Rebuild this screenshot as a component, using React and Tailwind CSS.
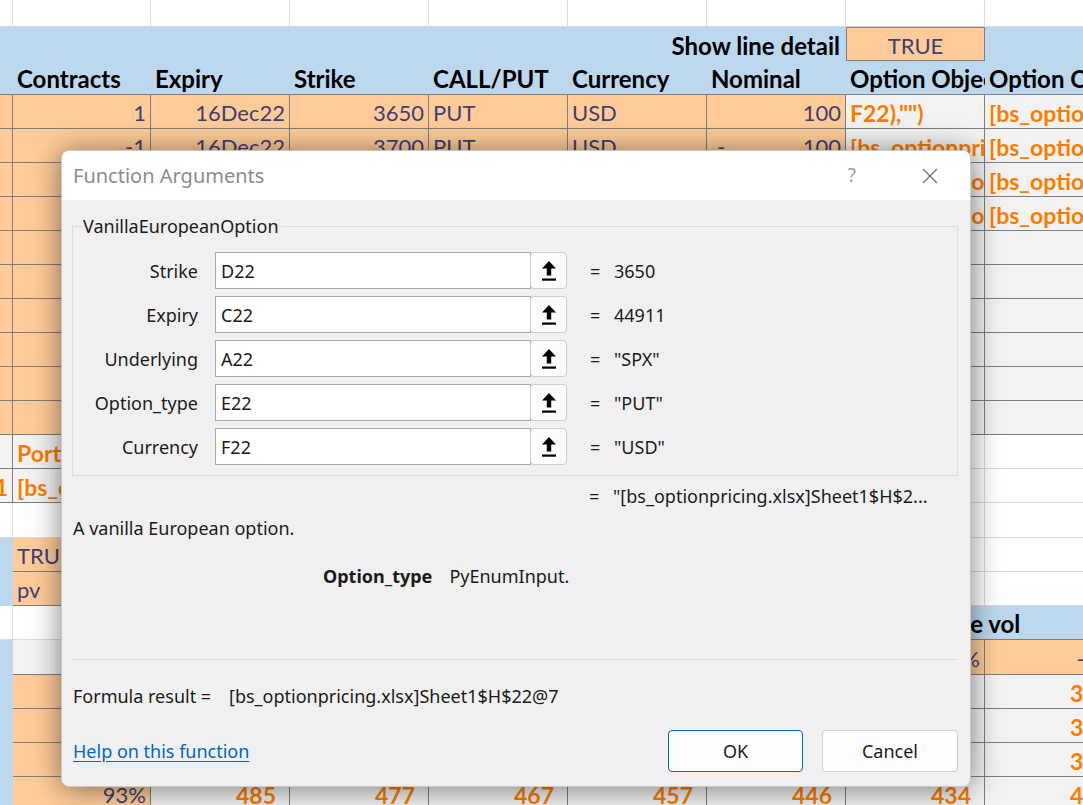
import React from 'react';

const COLS = ['w-[13px]', 'w-[138px]', 'w-[139px]', 'w-[139px]', 'w-[139px]', 'w-[139px]', 'w-[139px]', 'w-[139px]', 'w-[139px]'];

const KIND = {
  w: 'bg-white border-r border-b border-[#dadada]',
  b: 'bg-[#bdd7ee]',
  h: 'bg-[#bdd7ee] border-b border-[#7f7f7f] font-bold text-black text-[24px]',
  i: 'bg-[#ffcc99] border-r border-b border-[#7f7f7f] text-[#3f3f76]',
  c: 'bg-[#f2f2f2] border-r border-b border-[#7f7f7f] font-bold text-[#fa7d00] text-[23px]',
};

const ALIGN = {
  l: 'pl-[4px] overflow-hidden',
  r: 'justify-end pr-[4px] overflow-hidden',
  R: 'justify-end pr-[13px] overflow-hidden',
  c: 'justify-center overflow-hidden',
  j: 'justify-between pl-[10px] pr-[4px] overflow-hidden',
  o: 'justify-end pr-[6px]',
  v: 'relative z-[1] pl-[51px]',
};

const c = (k, v = '', a = 'l', x = '') => ({ k, v, a, x });
const fill = (k, n) => Array.from({ length: n }, () => c(k));

const rows = [
  { h: 'h-[27px]', cells: fill('w', 9) },
  {
    h: 'h-[34px]',
    cells: [...fill('b', 6), c('b', 'Show line detail', 'o', 'font-bold text-black text-[24px]'), c('i', 'TRUE', 'c', 'border-l border-t'), c('b')],
  },
  {
    h: 'h-[34px]',
    cells: [c('h'), c('h', 'Contracts'), c('h', 'Expiry'), c('h', 'Strike'), c('h', 'CALL/PUT'), c('h', 'Currency'), c('h', 'Nominal'), c('h', 'Option Object'), c('h', 'Option Cell')],
  },
  {
    h: 'h-[34px]',
    cells: [c('i'), c('i', '1', 'r'), c('i', '16Dec22', 'r'), c('i', '3650', 'r'), c('i', 'PUT'), c('i', 'USD'), c('i', '100', 'r'), c('c', 'F22),"")'), c('c', '[bs_optionpricing.xlsx]Sheet1$H$22@7')],
  },
  {
    h: 'h-[34px]',
    cells: [c('i'), c('i', '-1', 'r'), c('i', '16Dec22', 'r'), c('i', '3700', 'r'), c('i', 'PUT'), c('i', 'USD'), c('i', <><span>-</span><span>100</span></>, 'j'), c('c', '[bs_optionpricing.xlsx]Sheet1$H$23@7'), c('c', '[bs_optionpricing.xlsx]Sheet1$I$23@7')],
  },
  {
    h: 'h-[34px]',
    cells: [c('i'), c('i', '1', 'r'), c('i', '16Dec22', 'r'), c('i', '3750', 'r'), c('i', 'CALL'), c('i', 'USD'), c('i', '100', 'r'), c('c', '[bs_optionpo.xlsx]Sheet1$H$24@7'), c('c', '[bs_optionpricing.xlsx]Sheet1$I$24@7')],
  },
  {
    h: 'h-[34px]',
    cells: [c('i'), c('i', '-1', 'r'), c('i', '16Dec22', 'r'), c('i', '3800', 'r'), c('i', 'CALL'), c('i', 'USD'), c('i', <><span>-</span><span>100</span></>, 'j'), c('c', '[bs_optionpo.xlsx]Sheet1$H$25@7'), c('c', '[bs_optionpricing.xlsx]Sheet1$I$25@7')],
  },
  ...Array.from({ length: 6 }, () => ({ h: 'h-[34px]', cells: [...fill('i', 7), c('c'), c('c')] })),
  {
    h: 'h-[34px]',
    cells: [c('c'), c('c', 'Portfolio'), c('c'), ...fill('w', 6)],
  },
  {
    h: 'h-[34px]',
    cells: [c('c', 'c:1', 'r', 'pr-0'), c('c', '[bs_optionpricing.xlsx]Portfolio@1'), c('c'), ...fill('w', 6)],
  },
  { h: 'h-[35px]', cells: fill('w', 9) },
  { h: 'h-[34px]', cells: [c('b'), c('i', 'TRUE'), ...fill('w', 7)] },
  { h: 'h-[34px]', cells: [c('b'), c('i', 'pv'), ...fill('w', 7)] },
  {
    h: 'h-[34px]',
    cells: [c('w'), c('w'), c('h'), c('h'), c('h'), c('h'), c('h'), c('h', 'Relative vol', 'v', 'overflow-visible'), c('h')],
  },
  {
    h: 'h-[35px]',
    cells: [c('b'), c('c'), c('i', '-30%', 'r'), c('i', '-25%', 'r'), c('i', '-20%', 'r'), c('i', '-15%', 'r'), c('i', '-10%', 'r'), c('i', '-5%', 'r'), c('i', '-5%', 'r', 'pr-[8px]')],
  },
  { h: 'h-[34px]', cells: [c('b'), c('i', '96%', 'r'), c('c', '512', 'R'), c('c', '503', 'R'), c('c', '493', 'R'), c('c', '482', 'R'), c('c', '470', 'R'), c('c'), c('c', '352', 'R')] },
  { h: 'h-[34px]', cells: [c('b'), c('i', '95%', 'r'), c('c', '503', 'R'), c('c', '494', 'R'), c('c', '484', 'R'), c('c', '473', 'R'), c('c', '461', 'R'), c('c'), c('c', '341', 'R')] },
  { h: 'h-[34px]', cells: [c('b'), c('i', '94%', 'r'), c('c', '494', 'R'), c('c', '486', 'R'), c('c', '476', 'R'), c('c', '465', 'R'), c('c', '453', 'R'), c('c'), c('c', '329', 'R')] },
  { h: 'h-[34px]', cells: [c('b'), c('i', '93%', 'r'), c('c', '485', 'R'), c('c', '477', 'R'), c('c', '467', 'R'), c('c', '457', 'R'), c('c', '446', 'R'), c('c', '434', 'R'), c('c', '421', 'R')] },
];

const Cell = ({ w, k, v, a, x }) => (
  <div className={`${w} ${KIND[k]} ${ALIGN[a]} ${x} flex shrink-0 items-center whitespace-nowrap pt-[3px]`}>{v}</div>
);

const RefIcon = () => (
  <svg width="14" height="20" viewBox="0 0 14 20">
    <path d="M7 0 L14 7.5 L9.2 7.5 L9.2 14.5 L4.8 14.5 L4.8 7.5 L0 7.5 Z" fill="#000" />
    <rect x="0" y="17.5" width="14" height="2.2" fill="#000" />
  </svg>
);

const args = [
  ['Strike', 'D22', '3650'],
  ['Expiry', 'C22', '44911'],
  ['Underlying', 'A22', '"SPX"'],
  ['Option_type', 'E22', '"PUT"'],
  ['Currency', 'F22', '"USD"'],
];

const Dialog = () => (
  <div className="absolute left-[61px] top-[150px] z-10 flex h-[637px] w-[910px] flex-col overflow-hidden rounded-[8px] border border-[#c9c9c9] bg-[#f0f0f0] font-['Noto_Sans',sans-serif] text-[18px] text-[#1b1b1b] shadow-[0_2px_30px_rgba(0,0,0,0.5)]">
    <div className="flex h-[49px] shrink-0 items-center bg-white pl-[11px] pr-[32px]">
      <span className="flex-1 text-[20px] text-[#8c8c8c]">Function Arguments</span>
      <span className="text-[19px] text-[#a0a0a0]">?</span>
      <svg className="ml-[66px]" width="16" height="16" viewBox="0 0 16 16">
        <path d="M1 1 L15 15 M15 1 L1 15" stroke="#707070" strokeWidth="1.3" />
      </svg>
    </div>

    <div className="flex flex-1 flex-col pl-[10px] pr-[12px]">
      <div className="relative mt-[26px] h-[250px] shrink-0 border border-[#dcdcdc] pt-[25px]">
        <span className="absolute -top-[13px] left-[10px] bg-[#f0f0f0] pr-[2px] leading-[24px]">VanillaEuropeanOption</span>
        <div className="flex flex-col gap-[7px]">
          {args.map(([label, ref, val]) => (
            <div key={label} className="flex h-[37px] items-center">
              <span className="w-[125px] text-right">{label}</span>
              <div className="ml-[17px] flex h-[37px] w-[352px]">
                <div className="flex flex-1 items-center border border-[#a9a9a9] bg-white pl-[5px]">{ref}</div>
                <div className="-ml-[1px] flex w-[37px] items-center justify-center rounded-[4px] border border-[#cccccc] bg-[#fbfbfb]">
                  <RefIcon />
                </div>
              </div>
              <span className="ml-[23px] w-[10px]">=</span>
              <span className="ml-[14px]">{val}</span>
            </div>
          ))}
        </div>
      </div>

      <div className="mt-[8px] flex h-[24px] items-center">
        <span className="w-[517px]" />
        <span className="w-[10px]">=</span>
        <span className="ml-[14px]">"[bs_optionpricing.xlsx]Sheet1$H$2...</span>
      </div>

      <div className="mt-[8px] flex h-[24px] items-center pl-[1px]">A vanilla European option.</div>

      <div className="mt-[24px] flex h-[24px] items-center pl-[251px]">
        <span className="font-bold">Option_type</span>
        <span className="ml-[17px]">PyEnumInput.</span>
      </div>

      <div className="mt-[71px] h-px shrink-0 bg-[#dcdcdc]" />

      <div className="mt-[24px] flex h-[24px] items-center pl-[1px]">
        <span className="w-[156px]">Formula result =</span>
        <span>[bs_optionpricing.xlsx]Sheet1$H$22@7</span>
      </div>

      <div className="mt-[22px] flex h-[42px] items-center pl-[1px]">
        <span className="flex-1 text-[#0067c0] underline underline-offset-[3px]">Help on this function</span>
        <button className="flex h-[42px] w-[135px] items-center justify-center rounded-[4px] border border-[#0067c0] bg-[#fdfdfd]">OK</button>
        <button className="ml-[19px] flex h-[42px] w-[136px] items-center justify-center rounded-[4px] border border-[#d0d0d0] bg-[#fdfdfd]">Cancel</button>
      </div>
    </div>
  </div>
);

export default function App() {
  return (
    <div className="relative h-[805px] w-[1083px] overflow-hidden bg-white font-[Lato,sans-serif] text-[22px] leading-none">
      <div className="flex w-[1124px] flex-col">
        {rows.map((row, ri) => (
          <div key={ri} className={`flex ${row.h}`}>
            {row.cells.map((cell, ci) => (
              <Cell key={ci} w={COLS[ci]} {...cell} />
            ))}
          </div>
        ))}
      </div>
      <Dialog />
    </div>
  );
}
